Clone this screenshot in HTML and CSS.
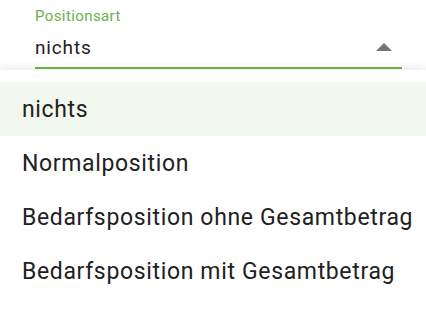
FILE: index.html
```html
<!DOCTYPE html>
<html lang="de">
<head>
<meta charset="utf-8">
<link rel="stylesheet" href="styles.css">
</head>
<body>
<div class="field">
  <div class="label">Positionsart</div>
  <div class="value-row">
    <span class="value">nichts</span>
    <svg class="arrow" width="16" height="8" viewBox="0 0 16 8"><polygon points="0,8 8,0 16,8" fill="#757575"/></svg>
  </div>
</div>
<div class="menu">
  <div class="item active">nichts</div>
  <div class="item">Normalposition</div>
  <div class="item">Bedarfsposition ohne Gesamtbetrag</div>
  <div class="item">Bedarfsposition mit Gesamtbetrag</div>
</div>
</body>
</html>
```
FILE: styles.css
```css
html, body {
  margin: 0;
  padding: 0;
  background: #ffffff;
  font-family: Roboto, "Noto Sans", Arial, sans-serif;
  color: #212121;
}
body {
  width: 426px;
  height: 309px;
  overflow: hidden;
}
.field {
  position: relative;
  z-index: 1;
  margin: 0 24px 0 35px;
  padding-top: 8px;
  padding-bottom: 7px;
  border-bottom: 2px solid #6aaf4a;
}
.label {
  font-size: 15px;
  line-height: 17px;
  letter-spacing: 0.4px;
  color: #6ab04c;
}
.value-row {
  margin-top: 11px;
  height: 24px;
  display: flex;
  align-items: center;
  justify-content: space-between;
}
.value {
  font-size: 19px;
  line-height: 24px;
  letter-spacing: 0.85px;
  color: #212121;
}
.arrow {
  margin-right: 10px;
  margin-top: -3px;
}
.menu {
  margin-top: 1px;
  padding-top: 12px;
  background: #ffffff;
  box-shadow: 0 -3px 8px rgba(0, 0, 0, 0.08);
  height: 227px;
}
.item {
  height: 54px;
  display: flex;
  align-items: center;
  padding-left: 22px;
  font-size: 23px;
  letter-spacing: 0.65px;
  color: #212121;
  white-space: nowrap;
}
.item.active {
  background: #f3f8ee;
}
```
